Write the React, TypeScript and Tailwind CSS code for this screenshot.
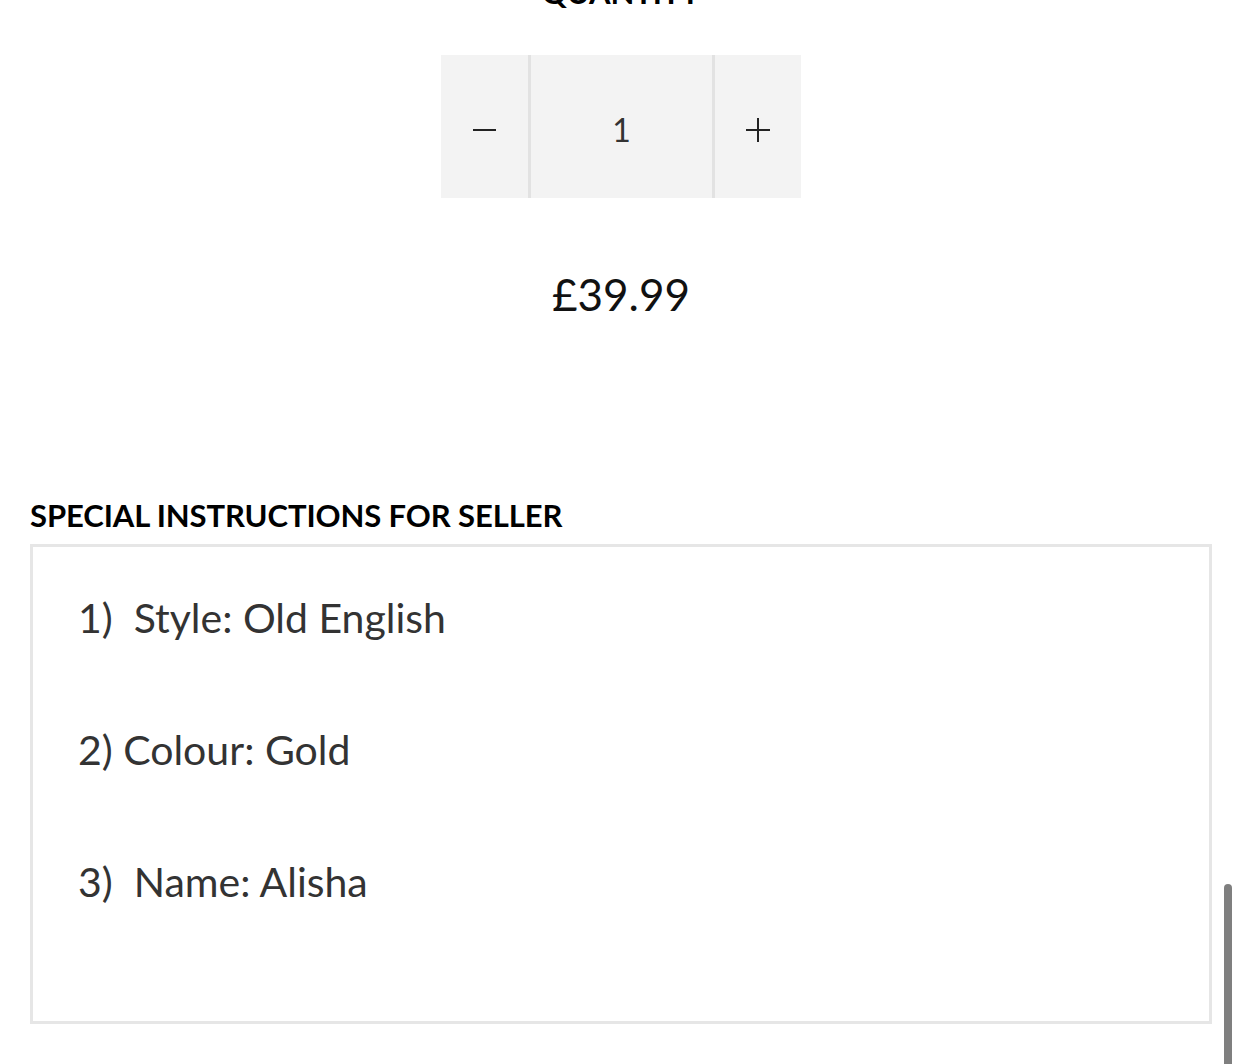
export default function App() {
  const notes = "1)  Style: Old English\n\n2) Colour: Gold\n\n3)  Name: Alisha";

  return (
    <div className="relative h-[1064px] w-[1242px] overflow-hidden bg-white font-['Lato','Open_Sans',sans-serif] text-[#111]">
      <div className="mt-[-23px] text-center text-[31px] leading-[31px] font-bold tracking-[-0.1px] text-black">QUANTITY</div>

      <div className="mx-auto mt-[47px] flex h-[143px] w-[360px] bg-[#f3f3f3]">
        <button type="button" className="flex w-[87px] items-center justify-center pt-[6px]">
          <span className="block h-[2px] w-[23px] bg-[#222]" />
        </button>
        <div className="w-[3px] bg-[#e2e2e2]" />
        <div className="flex flex-1 items-center justify-center pt-[6px] text-[32px] text-[#333]">1</div>
        <div className="w-[3px] bg-[#e2e2e2]" />
        <button type="button" className="flex w-[86px] items-center justify-center pt-[6px]">
          <svg width="26" height="26" viewBox="0 0 26 26">
            <path d="M13 1v24M1 13h24" stroke="#222" strokeWidth="2" />
          </svg>
        </button>
      </div>

      <div className="mt-[70px] text-center text-[44px] leading-[52px] text-[#111]">£39.99</div>

      <div className="mx-[30px] mt-[180px]">
        <h3 className="text-[31px] leading-[30px] font-bold tracking-[-0.1px] text-black">
          SPECIAL INSTRUCTIONS FOR SELLER
        </h3>
        <div className="mt-[14px] h-[480px] border-[3px] border-[#e6e6e6] pt-[38px] pl-[45px] text-[41px] leading-[66px] whitespace-pre text-[#333]">
          {notes}
        </div>
      </div>

      <div className="absolute top-[884px] right-[10px] h-[200px] w-[8px] rounded-full bg-[#7f7f7f]" />
    </div>
  );
}
